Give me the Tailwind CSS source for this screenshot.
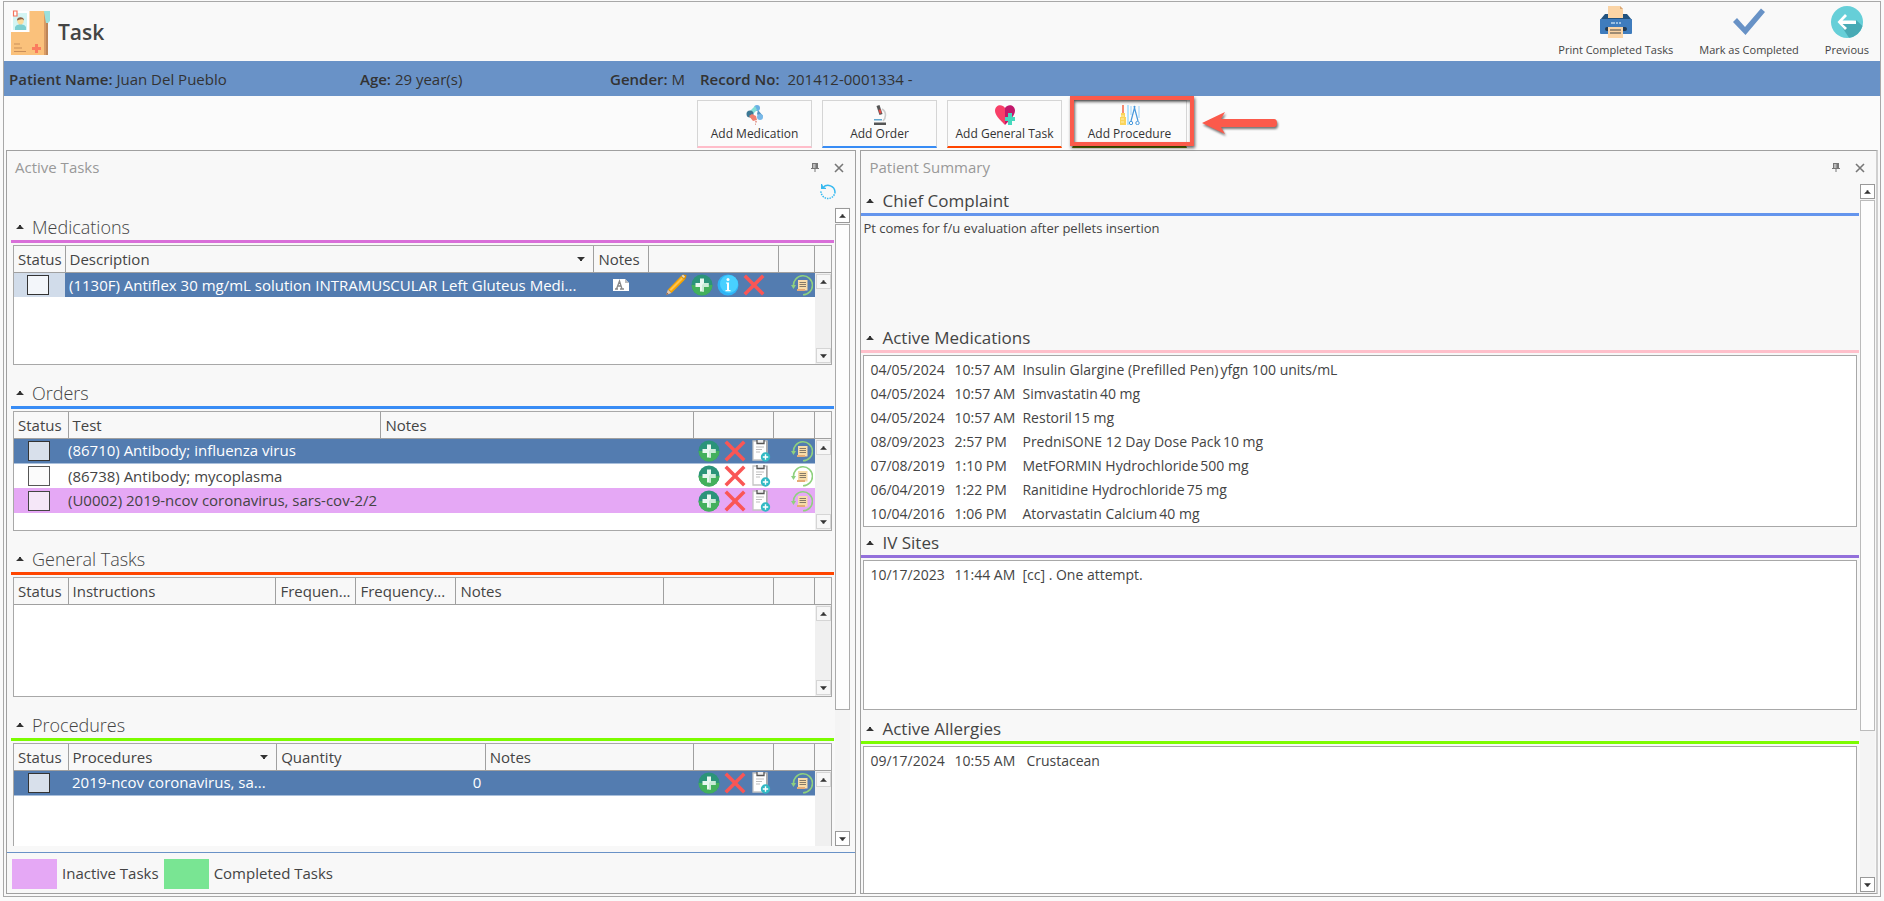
<!DOCTYPE html>
<html lang="en">
<head>
    <meta charset="UTF-8">
    <meta name="viewport" content="width=device-width, initial-scale=1.0">
    <title>Task</title>
    <script src="https://cdn.jsdelivr.net/npm/@tailwindcss/browser@4"></script>
</head>
<body class="h-screen overflow-hidden bg-[#fafafa] px-[3px] pt-px pb-1 font-['Open_Sans','Noto_Sans',sans-serif] text-[15px] text-[#444]">

    <!-- icon sprites -->
    <svg class="hidden" aria-hidden="true">
        <symbol id="up" viewBox="0 0 8 4"><path d="M0 4 3 1V0H5V1L8 4Z" fill="#333"/></symbol>
        <symbol id="down" viewBox="0 0 8 4"><path d="M0 0H8L5 3V4H3V3Z" fill="#333"/></symbol>
        <symbol id="pin" viewBox="0 0 8 9"><path d="M1.5 0H6.500V5H1.500Z" fill="#bbb"/><path d="M1 0H7V1H1ZM1 0H2V5H1ZM4.500 0H7V5H4.500ZM0 5H8V6H0ZM3.500 6H4.500V9H3.500Z" fill="#777"/></symbol>
        <symbol id="close" viewBox="0 0 10 10"><path d="M1 1 9 9M9 1 1 9" stroke="#777" stroke-width="1.600" fill="none"/></symbol>
        <symbol id="add" viewBox="0 0 22 22"><circle cx="11" cy="11" r="10.500" fill="#2b9479"/><path d="M.5 11a10.500 10.500 0 0 0 21 0Z" fill="#43b05c"/><path d="M9 4.500h4V9h4.500v4H13v4.500H9V13H4.500V9H9Z" fill="#e9f7f0"/><path d="M13 9h4.500v4H13v4.500h-2V11Z" fill="#c9ebd6"/></symbol>
        <symbol id="del" viewBox="0 0 22 22"><path d="M3 .5 11 8.500 19 .5 21.500 3 13.500 11 21.500 19 19 21.500 11 13.500 3 21.500 .5 19 8.500 11 .5 3Z" fill="#fa5655"/></symbol>
        <symbol id="info" viewBox="0 0 22 22"><circle cx="11" cy="11" r="10.500" fill="#2fb4f6"/><circle cx="12" cy="10" r="9" fill="#48d0ff"/><circle cx="11" cy="5.500" r="1.500" fill="#fff"/><path d="M9 8.500h3V16h1.500v1.200h-5V16H10V9.500H9Z" fill="#fff"/></symbol>
        <symbol id="pencil" viewBox="0 0 22 22"><path d="M1 21 3 15.500 6.500 19Z" fill="#e8c9a8"/><path d="M1 21 2 18.500 3.500 20Z" fill="#885d44"/><path d="M3 15.500 16 2 20 5.500 6.500 19Z" fill="#f5a300"/><path d="M4.500 15.500 16.500 3.500 18 5 6 17Z" fill="#ffc34d"/><path d="M16 2 18 .5 21.500 1 21 4 20 5.500Z" fill="#dd8f00"/><path d="M16.500 2 18 .7 20 2.500 19 4Z" fill="#ddd"/></symbol>
        <symbol id="clip" viewBox="0 0 20 22"><path d="M2 1H16V20H2Z" fill="#fff" stroke="#c4c4c4" stroke-width="1.300"/><path d="M15 1h1.500v13H15Z" fill="#aaa"/><path d="M6 0v3.500h7V0" fill="#eee" stroke="#555" stroke-width="1.300"/><path d="M5 7h8M5 9.500h6M5 12h4" stroke="#bdbdbd" stroke-width="1"/><circle cx="14.500" cy="17" r="4.700" fill="#31b9c4"/><path d="M14.500 14.300v5.400M11.800 17h5.400" stroke="#fff" stroke-width="1.400"/></symbol>
        <symbol id="history" viewBox="0 0 22 22"><path d="M2.500 12A9.500 9.500 0 1 1 12 20.800" fill="none" stroke="#8fd17e" stroke-width="1.600"/><path d="M0 11H5L2.500 15Z" fill="#8fd17e"/><path d="M7 6h9.500V16.500H6V15H7Z" fill="#f8dca9"/><path d="M6 15h8v2H6Z" fill="#e5ac78"/><path d="M8.500 8.500h6.500M8.500 10.500h6.500M8.500 12.500h6.500" stroke="#857a68" stroke-width="1.200"/></symbol>
    </svg>

    <div class="flex h-full flex-col border border-[#a8a8a8] bg-[#f9f9f9]">

        <header class="flex h-[59px] shrink-0 items-center justify-between pr-[11px] pl-1.5">
            <div class="flex items-center gap-2">
                <svg class="h-[46px] w-10" viewBox="0 0 40 46">
                    <path d="M34 2h6v10l-3 3h-3Z" fill="#9be0dd"/><path d="M33 14h5v32h-5Z" fill="#bd8558"/><path d="M1 2H34V46H1Z" fill="#fac17b"/><path d="M34 3v43h2V14Z" fill="#d99b64"/>
                    <path d="M1 2H19.500V23H1Z" fill="#fff"/><path d="M3 4H17V21H3Z" fill="#d3f5f4"/><circle cx="10.500" cy="12" r="3.200" fill="#fbdc9b"/><path d="M7 11.500C6.500 7 14.500 7 14 11.500 12.500 9 9 10.500 7 11.500Z" fill="#8d6145"/><path d="M9 14h3v3H9Z" fill="#fbdc9b"/><path d="M5 21v-3q1-2.500 4-2.500h3q3 0 4 2.500v3Z" fill="#7ccfd1"/>
                    <path d="M3.500 2H7V7H3.500Z" fill="#fff" stroke="#f4745d" stroke-width="1.200"/>
                    <path d="M4 35h6M4 39h8M4 42.500h12" stroke="#c98f5b"/><path d="M25 35h3v3h3v3h-3v3h-3v-3h-3v-3h3Z" fill="#fa7c5f"/>
                </svg>
                <h1 class="pt-0.5 text-[21px] font-semibold">Task</h1>
            </div>
            <div class="flex items-center gap-[26px] text-[11px] leading-4">
                <button class="flex flex-col items-center gap-1">
                    <svg class="size-8" viewBox="0 0 32 32">
                        <path d="M5 8h22l5 6H0Z" fill="#21527f"/><path d="M8 0h12l3 3v9H8Z" fill="#fbd4a5"/><path d="M20 0v3h3Z" fill="#d9a877"/><rect y="13" width="32" height="15" rx="1" fill="#3f7cbd"/><path d="M11 17h4M16 17h2M19 17h2" stroke="#b9d5ee" stroke-width="1.400"/><rect x="5" y="21" width="22" height="4" rx="2" fill="#243b53"/><path d="M8 21h15v11H8Z" fill="#fbd4a5"/><path d="M10 24h11M10 27h11" stroke="#444" stroke-width="1.200"/>
                    </svg>
                    Print Completed Tasks
                </button>
                <button class="flex flex-col items-center gap-1">
                    <svg class="size-8" viewBox="0 0 32 32"><path d="M0 16 4 12 12 21 28 2.500 32 6 12.500 29Z" fill="#6892c6"/></svg>
                    Mark as Completed
                </button>
                <button class="flex flex-col items-center gap-1">
                    <svg class="size-8" viewBox="0 0 32 32"><circle cx="16" cy="16" r="16" fill="#66cfd8"/><path d="M25 14 31.500 20A16 16 0 0 1 18 31.800L9 18Z" fill="#48aab5"/><path d="M6.500 16 14 8l2 2-4.500 4.500H25v3.500H11.500L16 22l-2 2Z" fill="#fff"/></svg>
                    Previous
                </button>
            </div>
        </header>

        <div class="flex h-[35px] shrink-0 items-center bg-[#6992c7] pt-px pl-[5px] text-[#333]">
            <div class="w-[351px]"><span class="font-semibold">Patient Name:</span> Juan Del Pueblo</div>
            <div class="w-[250px]"><span class="font-semibold">Age:</span> 29 year(s)</div>
            <div class="w-[90px]"><span class="font-semibold">Gender:</span> M</div>
            <div><span class="mr-1 font-semibold">Record No:</span> 201412-0001334 -</div>
        </div>

        <nav class="flex h-[54px] shrink-0 justify-center gap-2.5 bg-[#fbfbfb] pt-1 text-xs text-[#333]">
            <button class="flex h-12 w-[115px] flex-col items-center gap-px border border-b-2 border-[#d5d5d5] border-b-[#ffbdca] pt-1">
                <svg class="h-5 w-[18px] shrink-0" viewBox="0 0 18 20"><circle cx="11" cy="3" r="3" fill="#6ab1e4"/><path d="m9 1-6 6 3 3 5-5Z" fill="#82ded7"/><circle cx="4" cy="9" r="3.500" fill="#3c7894"/><path d="m3 11 4 5 4-1-1-4-4-2Z" fill="#ef8070"/><path d="m12 5 5 6-3 3-3-5Z" fill="#5495c4"/><circle cx="14" cy="12" r="3" fill="#78b8e8"/><path d="M9 16h2v1.500H9ZM9 18.500h1V20H9Z" fill="#e3a69e"/></svg>
                Add Medication
            </button>
            <button class="flex h-12 w-[115px] flex-col items-center gap-px border border-b-2 border-[#d5d5d5] border-b-[#388cf5] pt-1">
                <svg class="h-5 w-[18px] shrink-0" viewBox="0 0 18 20"><path d="m5.500 1 3-1 3 9-3 1Z" fill="#555"/><path d="m7.500 5 2-.7 1.200 3.700-2 .7Z" fill="#e34e49"/><path d="M11 4c5 3 4 9 1 12" fill="none" stroke="#ccc" stroke-width="1.600"/><path d="M3 14h8v1.500H3Z" fill="#60a7cf"/><path d="M3 17.500h12V20H3Z" fill="#555"/></svg>
                Add Order
            </button>
            <button class="flex h-12 w-[115px] flex-col items-center gap-px border border-b-2 border-[#d5d5d5] border-b-[#ff4500] pt-1">
                <svg class="h-5 w-5 shrink-0" viewBox="0 0 20 20"><path d="M10 20C4 14 0 10 0 5.500 0 0 7-2 10 3Z" fill="#f83f68"/><path d="M10 20C16 14 20 10 20 5.500 20 0 13-2 10 3Z" fill="#c2186b"/><path d="M13 8h4v4h3v4h-3v4h-4v-4h-3v-4h3Z" fill="#45d8bd"/></svg>
                Add General Task
            </button>
            <div class="relative">
                <button class="flex h-12 w-[115px] flex-col items-center gap-px border border-b-2 border-[#d5d5d5] border-b-[#6b8000] pt-1">
                    <svg class="h-5 w-5 shrink-0" viewBox="0 0 20 20"><path d="M2 0h2v8H2Z" fill="#f58b72"/><path d="M0 12h1V8h4v4h1v8H0Z" fill="#fbd45b"/><path d="M1 11h3M1 14h3M1 17h3" stroke="#fff0b0"/><path d="M7 0h2v20H7Z" fill="#b5e3ff"/><path d="m15 1-4 15M14 1l4 15" fill="none" stroke="#4798dc" stroke-width="1.200"/><path d="M11 1v9M19 1v12" fill="none" stroke="#9bd3fb"/><circle cx="11" cy="18" r="1.700" fill="none" stroke="#4798dc"/><circle cx="17.500" cy="18" r="1.700" fill="none" stroke="#4798dc"/></svg>
                    Add Procedure
                </button>
                <!-- callout over the button -->
                <div class="pointer-events-none absolute -top-1 -right-[7px] -left-0.5 h-[50px] border-4 border-[#fb5a4b] shadow-[1px_2px_3px_#0009,inset_1px_2px_3px_#0009]"></div>
                <svg class="absolute top-3 left-[130px] h-[26px] w-[78px] drop-shadow-[1px_2px_1px_#0008]" viewBox="0 0 78 26"><path d="M0 11 23 0 19 7H72Q75 7 75 11T72 15H19L23 22Z" fill="#fb5a4b"/></svg>
            </div>
        </nav>

        <main class="grid min-h-0 grow grid-cols-[850fr_1017fr] gap-1 px-0.5 pb-0.5">

            <!-- Active Tasks -->
            <section class="flex min-h-0 min-w-0 flex-col border border-[#a0a0a0] bg-[#f8f8f8]">
                <div class="flex h-[33px] shrink-0 items-center gap-[15px] pr-[11px] pl-2">
                    <h2 class="grow text-[#999]">Active Tasks</h2>
                    <button aria-label="Pin"><svg class="h-[9px] w-2"><use href="#pin"/></svg></button>
                    <button aria-label="Close"><svg class="size-2.5"><use href="#close"/></svg></button>
                </div>
                <div class="flex h-[23px] shrink-0 items-start justify-end pr-[19px]">
                    <button aria-label="Refresh"><svg class="size-4" viewBox="0 0 16 16"><path d="M3 3.500A7 7 0 0 1 15 8" fill="none" stroke="#36b9f0" stroke-width="1.500"/><path d="M15 8A7 7 0 0 1 1 7" fill="none" stroke="#36b9f0" stroke-width="1.500" stroke-dasharray="1.500 1"/><path d="M1 0v5h5V4L3.500 3 2 0Z" fill="#36b9f0"/></svg></button>
                </div>

                <div class="flex min-h-0 grow pr-[5px] pb-1.5 pl-1">
                    <div class="min-w-0 grow overflow-hidden">

                        <div class="mb-2">
                            <h3 class="flex h-9 items-center gap-2 border-b-[3px] border-[#d96fd9] pt-1.5 pl-[5px] text-lg font-light"><svg class="h-1 w-2"><use href="#up"/></svg>Medications</h3>
                            <div class="mx-0.5 mt-0.5 flex h-[120px] border border-[#a8a8a8] bg-white">
                                <div class="min-w-0 grow">
                                    <table class="w-full table-fixed whitespace-nowrap">
                                        <colgroup><col class="w-[51px]"><col><col class="w-[55px]"><col class="w-[130px]"><col class="w-9"></colgroup>
                                        <thead>
                                            <tr class="h-[26px] border-b border-[#a0a0a0] bg-[#f8f8f8] text-left [&>th]:border-r [&>th]:border-[#a0a0a0] [&>th]:px-1 [&>th]:py-0 [&>th]:font-normal">
                                                <th>Status</th>
                                                <th><div class="flex items-center justify-between pr-1">Description<svg class="h-1 w-2"><use href="#down"/></svg></div></th>
                                                <th>Notes</th><th></th><th></th>
                                            </tr>
                                        </thead>
                                        <tbody>
                                            <tr class="h-[25px] bg-[#537cb0] text-white [&>td]:p-0">
                                                <td class="bg-[#d1dcea]"><input type="checkbox" aria-label="Status" class="ml-[13px] block h-5 w-[22px] appearance-none border border-[#333] bg-[#f3f6fa]"></td>
                                                <td class="overflow-hidden"><div class="pl-1">(1130F) Antiflex 30 mg/mL solution INTRAMUSCULAR Left Gluteus Medi...</div></td>
                                                <td><svg class="mx-auto h-3 w-4" viewBox="0 0 16 12"><path d="M0 0H12L16 4V12H0Z" fill="#fff"/><path d="M12 0V4H16Z" fill="#bbb"/><path d="M2 10H5M7 10H11M3.500 10 6.500 2 9 10M4.500 7H8" fill="none" stroke="#888" stroke-width="1.300"/></svg></td>
                                                <td><div class="flex justify-end gap-1 pr-[14px]">
                                                    <button aria-label="Edit"><svg class="block size-[22px]"><use href="#pencil"/></svg></button>
                                                    <button aria-label="Add"><svg class="block size-[22px]"><use href="#add"/></svg></button>
                                                    <button aria-label="Info"><svg class="block size-[22px]"><use href="#info"/></svg></button>
                                                    <button aria-label="Delete"><svg class="block size-[22px]"><use href="#del"/></svg></button>
                                                </div></td>
                                                <td><button aria-label="History" class="ml-auto block pr-0.5"><svg class="block size-[22px]"><use href="#history"/></svg></button></td>
                                            </tr>
                                        </tbody>
                                    </table>
                                </div>
                                <div class="flex w-4 shrink-0 flex-col">
                                    <div class="h-[27px] border-b border-[#a0a0a0] bg-[#f8f8f8]"></div>
                                    <div class="flex grow flex-col items-center justify-between bg-[#f0f0f0] py-px">
                                        <button aria-label="Scroll up" class="grid size-[15px] place-items-center border border-[#d5d5d5] bg-[#f7f7f7]"><svg class="h-1 w-[7px]"><use href="#up"/></svg></button>
                                        <button aria-label="Scroll down" class="grid size-[15px] place-items-center border border-[#d5d5d5] bg-[#f7f7f7]"><svg class="h-1 w-[7px]"><use href="#down"/></svg></button>
                                    </div>
                                </div>
                            </div>
                        </div>

                        <div class="mb-2">
                            <h3 class="flex h-9 items-center gap-2 border-b-[3px] border-[#388cf5] pt-1.5 pl-[5px] text-lg font-light"><svg class="h-1 w-2"><use href="#up"/></svg>Orders</h3>
                            <div class="mx-0.5 mt-0.5 flex h-[120px] border border-[#a8a8a8] bg-white">
                                <div class="min-w-0 grow">
                                    <table class="w-full table-fixed whitespace-nowrap">
                                        <colgroup><col class="w-[54px]"><col><col><col class="w-20"><col class="w-[41px]"></colgroup>
                                        <thead>
                                            <tr class="h-[26px] border-b border-[#a0a0a0] bg-[#f8f8f8] text-left [&>th]:border-r [&>th]:border-[#a0a0a0] [&>th]:px-1 [&>th]:py-0 [&>th]:font-normal">
                                                <th>Status</th><th>Test</th><th>Notes</th><th></th><th></th>
                                            </tr>
                                        </thead>
                                        <tbody>
                                            <tr class="h-[25px] border-b border-[#a9bfdb] bg-[#537cb0] text-white [&>td]:p-0">
                                                <td><input type="checkbox" aria-label="Status" class="ml-[14px] block h-5 w-[22px] appearance-none border border-[#333] bg-[#d8e0eb]"></td>
                                                <td class="overflow-hidden">(86710) Antibody; influenza virus</td>
                                                <td></td>
                                                <td><div class="flex justify-end gap-1 pr-0.5">
                                                    <button aria-label="Add"><svg class="block size-[22px]"><use href="#add"/></svg></button>
                                                    <button aria-label="Delete"><svg class="block size-[22px]"><use href="#del"/></svg></button>
                                                    <button aria-label="Add note"><svg class="block size-[22px]"><use href="#clip"/></svg></button>
                                                </div></td>
                                                <td><button aria-label="History" class="ml-auto block pr-0.5"><svg class="block size-[22px]"><use href="#history"/></svg></button></td>
                                            </tr>
                                            <tr class="h-[25px] bg-white [&>td]:p-0">
                                                <td><input type="checkbox" aria-label="Status" class="ml-[14px] block h-5 w-[22px] appearance-none border border-[#555] bg-[#fbfbfb]"></td>
                                                <td class="overflow-hidden">(86738) Antibody; mycoplasma</td>
                                                <td></td>
                                                <td><div class="flex justify-end gap-1 pr-0.5">
                                                    <button aria-label="Add"><svg class="block size-[22px]"><use href="#add"/></svg></button>
                                                    <button aria-label="Delete"><svg class="block size-[22px]"><use href="#del"/></svg></button>
                                                    <button aria-label="Add note"><svg class="block size-[22px]"><use href="#clip"/></svg></button>
                                                </div></td>
                                                <td><button aria-label="History" class="ml-auto block pr-0.5"><svg class="block size-[22px]"><use href="#history"/></svg></button></td>
                                            </tr>
                                            <tr class="h-[25px] bg-[#e5a8f5] [&>td]:p-0">
                                                <td><input type="checkbox" aria-label="Status" class="ml-[14px] block h-5 w-[22px] appearance-none border border-[#444] bg-[#f5e7f8]"></td>
                                                <td class="overflow-hidden">(U0002) 2019-ncov coronavirus, sars-cov-2/2</td>
                                                <td></td>
                                                <td><div class="flex justify-end gap-1 pr-0.5">
                                                    <button aria-label="Add"><svg class="block size-[22px]"><use href="#add"/></svg></button>
                                                    <button aria-label="Delete"><svg class="block size-[22px]"><use href="#del"/></svg></button>
                                                    <button aria-label="Add note"><svg class="block size-[22px]"><use href="#clip"/></svg></button>
                                                </div></td>
                                                <td><button aria-label="History" class="ml-auto block pr-0.5"><svg class="block size-[22px]"><use href="#history"/></svg></button></td>
                                            </tr>
                                        </tbody>
                                    </table>
                                </div>
                                <div class="flex w-4 shrink-0 flex-col">
                                    <div class="h-[27px] border-b border-[#a0a0a0] bg-[#f8f8f8]"></div>
                                    <div class="flex grow flex-col items-center justify-between bg-[#f0f0f0] py-px">
                                        <button aria-label="Scroll up" class="grid size-[15px] place-items-center border border-[#d5d5d5] bg-[#f7f7f7]"><svg class="h-1 w-[7px]"><use href="#up"/></svg></button>
                                        <button aria-label="Scroll down" class="grid size-[15px] place-items-center border border-[#d5d5d5] bg-[#f7f7f7]"><svg class="h-1 w-[7px]"><use href="#down"/></svg></button>
                                    </div>
                                </div>
                            </div>
                        </div>

                        <div class="mb-2">
                            <h3 class="flex h-9 items-center gap-2 border-b-[3px] border-[#ff4500] pt-1.5 pl-[5px] text-lg font-light"><svg class="h-1 w-2"><use href="#up"/></svg>General Tasks</h3>
                            <div class="mx-0.5 mt-0.5 flex h-[120px] border border-[#a8a8a8] bg-white">
                                <div class="min-w-0 grow">
                                    <table class="w-full table-fixed whitespace-nowrap">
                                        <colgroup><col class="w-[54px]"><col><col class="w-20"><col class="w-[100px]"><col><col class="w-[110px]"><col class="w-[41px]"></colgroup>
                                        <thead>
                                            <tr class="h-[26px] border-b border-[#a0a0a0] bg-[#f8f8f8] text-left [&>th]:border-r [&>th]:border-[#a0a0a0] [&>th]:px-1 [&>th]:py-0 [&>th]:font-normal">
                                                <th>Status</th><th>Instructions</th><th>Frequen...</th><th>Frequency...</th><th>Notes</th><th></th><th></th>
                                            </tr>
                                        </thead>
                                    </table>
                                </div>
                                <div class="flex w-4 shrink-0 flex-col">
                                    <div class="h-[27px] border-b border-[#a0a0a0] bg-[#f8f8f8]"></div>
                                    <div class="flex grow flex-col items-center justify-between bg-[#f0f0f0] py-px">
                                        <button aria-label="Scroll up" class="grid size-[15px] place-items-center border border-[#d5d5d5] bg-[#f7f7f7]"><svg class="h-1 w-[7px]"><use href="#up"/></svg></button>
                                        <button aria-label="Scroll down" class="grid size-[15px] place-items-center border border-[#d5d5d5] bg-[#f7f7f7]"><svg class="h-1 w-[7px]"><use href="#down"/></svg></button>
                                    </div>
                                </div>
                            </div>
                        </div>

                        <div class="mb-2">
                            <h3 class="flex h-9 items-center gap-2 border-b-[3px] border-[#7cfc00] pt-1.5 pl-[5px] text-lg font-light"><svg class="h-1 w-2"><use href="#up"/></svg>Procedures</h3>
                            <div class="mx-0.5 mt-0.5 flex h-[120px] border border-[#a8a8a8] bg-white">
                                <div class="min-w-0 grow">
                                    <table class="w-full table-fixed whitespace-nowrap">
                                        <colgroup><col class="w-[54px]"><col><col><col><col class="w-20"><col class="w-[41px]"></colgroup>
                                        <thead>
                                            <tr class="h-[26px] border-b border-[#a0a0a0] bg-[#f8f8f8] text-left [&>th]:border-r [&>th]:border-[#a0a0a0] [&>th]:px-1 [&>th]:py-0 [&>th]:font-normal">
                                                <th>Status</th>
                                                <th><div class="flex items-center justify-between pr-1">Procedures<svg class="h-1 w-2"><use href="#down"/></svg></div></th>
                                                <th>Quantity</th><th>Notes</th><th></th><th></th>
                                            </tr>
                                        </thead>
                                        <tbody>
                                            <tr class="h-[25px] border-b border-[#a9bfdb] bg-[#537cb0] text-white [&>td]:p-0">
                                                <td><input type="checkbox" aria-label="Status" class="ml-[14px] block h-5 w-[22px] appearance-none border border-[#333] bg-[#d8e0eb]"></td>
                                                <td class="overflow-hidden"><div class="pl-1">2019-ncov coronavirus, sa...</div></td>
                                                <td><div class="pr-1 text-right">0</div></td>
                                                <td></td>
                                                <td><div class="flex justify-end gap-1 pr-0.5">
                                                    <button aria-label="Add"><svg class="block size-[22px]"><use href="#add"/></svg></button>
                                                    <button aria-label="Delete"><svg class="block size-[22px]"><use href="#del"/></svg></button>
                                                    <button aria-label="Add note"><svg class="block size-[22px]"><use href="#clip"/></svg></button>
                                                </div></td>
                                                <td><button aria-label="History" class="ml-auto block pr-0.5"><svg class="block size-[22px]"><use href="#history"/></svg></button></td>
                                            </tr>
                                        </tbody>
                                    </table>
                                </div>
                                <div class="flex w-4 shrink-0 flex-col">
                                    <div class="h-[27px] border-b border-[#a0a0a0] bg-[#f8f8f8]"></div>
                                    <div class="flex grow flex-col items-center justify-between bg-[#f0f0f0] py-px">
                                        <button aria-label="Scroll up" class="grid size-[15px] place-items-center border border-[#d5d5d5] bg-[#f7f7f7]"><svg class="h-1 w-[7px]"><use href="#up"/></svg></button>
                                        <button aria-label="Scroll down" class="grid size-[15px] place-items-center border border-[#d5d5d5] bg-[#f7f7f7]"><svg class="h-1 w-[7px]"><use href="#down"/></svg></button>
                                    </div>
                                </div>
                            </div>
                        </div>
                    </div>

                    <!-- panel scrollbar -->
                    <div class="ml-px flex w-[15px] shrink-0 flex-col gap-px bg-[#f4f4f4] pt-px">
                        <button aria-label="Scroll up" class="grid size-[15px] shrink-0 place-items-center border border-[#999] bg-white"><svg class="h-1 w-[7px]"><use href="#up"/></svg></button>
                        <div class="grow-[486] border border-[#aaa] bg-[#fdfdfd]"></div>
                        <div class="grow-[119]"></div>
                        <button aria-label="Scroll down" class="grid size-[15px] shrink-0 place-items-center border border-[#999] bg-white"><svg class="h-1 w-[7px]"><use href="#down"/></svg></button>
                    </div>
                </div>

                <div class="flex h-[41px] shrink-0 items-center gap-[5px] border-t border-[#6992c7] pt-px pl-[5px]">
                    <div class="h-[30px] w-[45px] bg-[#e5a8f5]"></div>
                    <span>Inactive Tasks</span>
                    <div class="h-[30px] w-[45px] bg-[#79e593]"></div>
                    <span>Completed Tasks</span>
                </div>
            </section>

            <!-- Patient Summary -->
            <section class="flex min-h-0 min-w-0 flex-col border border-r-2 border-[#a0a0a0] border-r-[#cfcfcf] bg-[#f8f8f8]">
                <div class="flex h-[33px] shrink-0 items-center gap-[15px] pr-[11px] pl-2">
                    <h2 class="grow text-[#999]">Patient Summary</h2>
                    <button aria-label="Pin"><svg class="h-[9px] w-2"><use href="#pin"/></svg></button>
                    <button aria-label="Close"><svg class="size-2.5"><use href="#close"/></svg></button>
                </div>
                <div class="flex min-h-0 grow pr-px">
                    <div class="flex min-w-0 grow flex-col">
                        <h3 class="flex h-8 shrink-0 items-center gap-2 border-b-[3px] border-[#6495ed] pt-1 pl-[5px] text-[17px]"><svg class="h-1 w-2"><use href="#up"/></svg>Chief Complaint</h3>
                        <p class="h-[105px] shrink-0 pt-[3px] pl-0.5 text-[13px]">Pt comes for f/u evaluation after pellets insertion</p>

                        <h3 class="flex h-8 shrink-0 items-center gap-2 border-b-[3px] border-[#ffc0cb] pt-1 pl-[5px] text-[17px]"><svg class="h-1 w-2"><use href="#up"/></svg>Active Medications</h3>
                        <ul class="mx-0.5 mt-0.5 h-[172px] shrink-0 overflow-hidden border border-[#a8a8a8] bg-white pt-0.5 pl-1.5 text-sm leading-6">
                            <li class="flex"><span class="w-[84px]">04/05/2024</span><span class="w-[68px]">10:57 AM</span><span class="mr-0.5">Insulin Glargine (Prefilled Pen)</span><span>yfgn 100 units/mL</span></li>
                            <li class="flex"><span class="w-[84px]">04/05/2024</span><span class="w-[68px]">10:57 AM</span><span class="mr-0.5">Simvastatin</span><span>40 mg</span></li>
                            <li class="flex"><span class="w-[84px]">04/05/2024</span><span class="w-[68px]">10:57 AM</span><span class="mr-0.5">Restoril</span><span>15 mg</span></li>
                            <li class="flex"><span class="w-[84px]">08/09/2023</span><span class="w-[68px]">2:57 PM</span><span class="mr-0.5">PredniSONE 12 Day Dose Pack</span><span>10 mg</span></li>
                            <li class="flex"><span class="w-[84px]">07/08/2019</span><span class="w-[68px]">1:10 PM</span><span class="mr-0.5">MetFORMIN Hydrochloride</span><span>500 mg</span></li>
                            <li class="flex"><span class="w-[84px]">06/04/2019</span><span class="w-[68px]">1:22 PM</span><span class="mr-0.5">Ranitidine Hydrochloride</span><span>75 mg</span></li>
                            <li class="flex"><span class="w-[84px]">10/04/2016</span><span class="w-[68px]">1:06 PM</span><span class="mr-0.5">Atorvastatin Calcium</span><span>40 mg</span></li>
                        </ul>

                        <h3 class="flex h-[31px] shrink-0 items-center gap-2 border-b-[3px] border-[#9370db] pt-1 pl-[5px] text-[17px]"><svg class="h-1 w-2"><use href="#up"/></svg>IV Sites</h3>
                        <ul class="mx-0.5 mt-0.5 h-[150px] shrink-0 border border-[#a8a8a8] bg-white pt-0.5 pl-1.5 text-sm leading-6">
                            <li class="flex"><span class="w-[84px]">10/17/2023</span><span class="w-[68px]">11:44 AM</span><span>[cc] . One attempt.</span></li>
                        </ul>

                        <h3 class="mt-0.5 flex h-8 shrink-0 items-center gap-2 border-b-[3px] border-[#7cfc00] pt-1 pl-[5px] text-[17px]"><svg class="h-1 w-2"><use href="#up"/></svg>Active Allergies</h3>
                        <ul class="mx-0.5 mt-0.5 grow border border-b-0 border-[#a8a8a8] bg-white pt-0.5 pl-1.5 text-sm leading-6">
                            <li class="flex"><span class="w-[84px]">09/17/2024</span><span class="w-[72px]">10:55 AM</span><span>Crustacean</span></li>
                        </ul>
                    </div>

                    <div class="ml-px flex w-[15px] shrink-0 flex-col gap-px bg-[#f4f4f4] pb-px">
                        <button aria-label="Scroll up" class="grid size-[15px] shrink-0 place-items-center border border-[#999] bg-white"><svg class="h-1 w-[7px]"><use href="#up"/></svg></button>
                        <div class="grow-[531] border border-[#bbb] bg-[#fdfdfd]"></div>
                        <div class="grow-[145]"></div>
                        <button aria-label="Scroll down" class="grid size-[15px] shrink-0 place-items-center border border-[#999] bg-white"><svg class="h-1 w-[7px]"><use href="#down"/></svg></button>
                    </div>
                </div>
            </section>
        </main>
    </div>
</body>
</html>
